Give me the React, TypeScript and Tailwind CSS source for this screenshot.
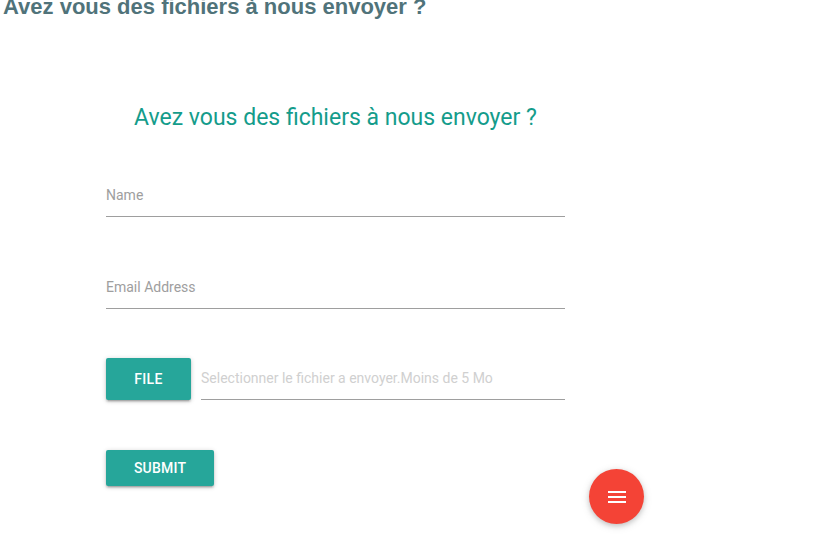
export default function App() {
  return (
    <div className="relative w-[816px] h-[535px] overflow-hidden bg-white">
      <h1 className="-mt-[4px] pl-[3px] text-[22px] leading-[22px] font-bold text-[#50737a] font-['Liberation_Sans',Arial,sans-serif]">
        Avez vous des fichiers à nous envoyer ?
      </h1>

      <form className="ml-[106px] w-[459px] flex flex-col font-['Roboto',sans-serif]">
        <h5 className="mt-[86px] text-center text-[23px] leading-[28px] text-[#149c8b]">
          Avez vous des fichiers à nous envoyer ?
        </h5>

        <div className="mt-[53px] h-[32px] border-b border-[#9e9e9e]">
          <label className="block text-[14px] leading-[20px] text-[#9e9e9e]">Name</label>
        </div>

        <div className="mt-[60px] h-[32px] border-b border-[#9e9e9e]">
          <label className="block text-[14px] leading-[20px] text-[#9e9e9e]">Email Address</label>
        </div>

        <div className="mt-[49px] flex items-end gap-[10px]">
          <div className="h-[42px] w-[85px] flex items-center justify-center rounded-[2px] bg-[#26a69a] text-white text-[14px] font-medium tracking-[0.3px] shadow-[0_2px_2px_0_rgba(0,0,0,0.14),0_3px_1px_-2px_rgba(0,0,0,0.12),0_1px_5px_0_rgba(0,0,0,0.2)]">
            FILE
          </div>
          <div className="flex-1 h-[42px] flex items-center border-b border-[#9e9e9e] text-[14px] text-[#d0d0d0]">
            Selectionner le fichier a envoyer.Moins de 5 Mo
          </div>
        </div>

        <div className="mt-[50px] flex">
          <button
            type="button"
            className="h-[36px] w-[108px] rounded-[2px] bg-[#26a69a] text-white text-[14px] font-medium tracking-[0.2px] shadow-[0_2px_2px_0_rgba(0,0,0,0.14),0_3px_1px_-2px_rgba(0,0,0,0.12),0_1px_5px_0_rgba(0,0,0,0.2)]"
          >
            SUBMIT
          </button>
        </div>
      </form>

      {/* bouton flottant */}
      <button
        type="button"
        className="absolute left-[589px] top-[469px] w-[55px] h-[55px] rounded-full bg-[#f44336] flex items-center justify-center shadow-[0_2px_5px_0_rgba(0,0,0,0.16),0_2px_10px_0_rgba(0,0,0,0.12)]"
      >
        <svg viewBox="0 0 24 24" className="w-[24px] h-[24px]" fill="white">
          <path d="M3 18h18v-2H3v2zm0-5h18v-2H3v2zm0-7v2h18V6H3z" />
        </svg>
      </button>
    </div>
  );
}
